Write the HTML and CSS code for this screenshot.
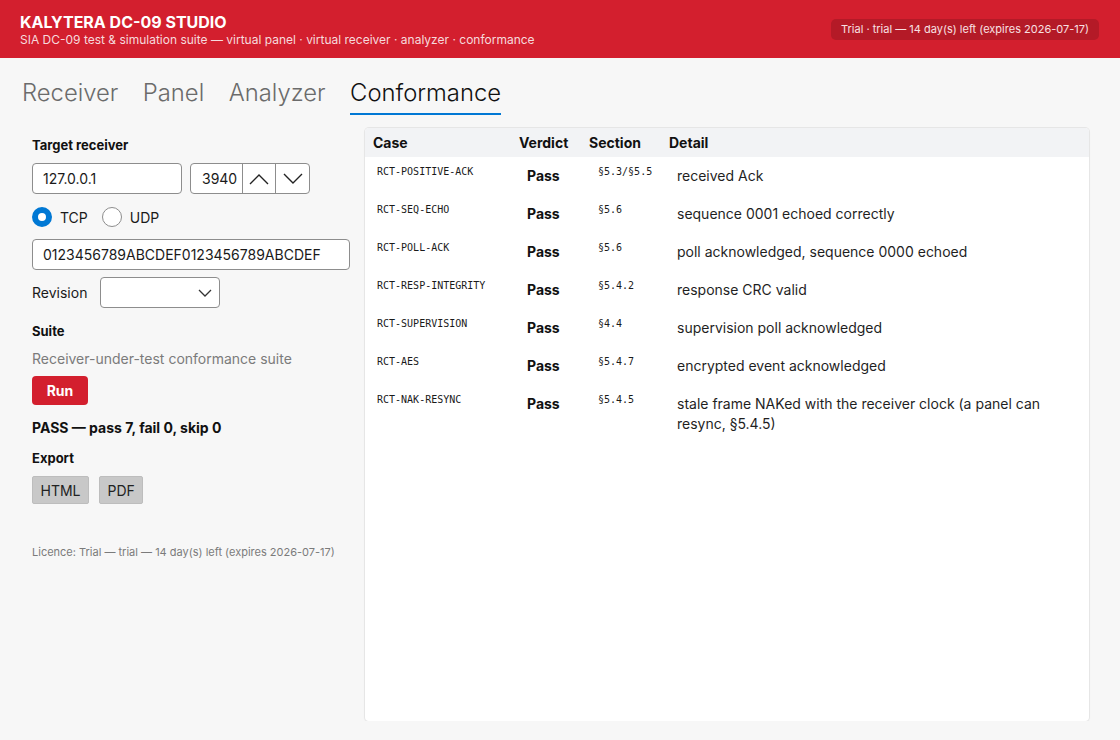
FILE: index.html
```html
<!DOCTYPE html>
<html lang="en">
<head>
    <meta charset="UTF-8">
    <title>Kalytera DC-09 Studio</title>
    <link rel="stylesheet" href="styles.css">
</head>
<body>
    <header class="topbar">
        <div class="brand">
            <h1>KALYTERA DC-09 STUDIO</h1>
            <p>SIA DC-09 test &amp; simulation suite — virtual panel · virtual receiver · analyzer · conformance</p>
        </div>
        <div class="licence-badge">Trial · trial — 14 day(s) left (expires 2026-07-17)</div>
    </header>

    <nav class="tabs">
        <a class="tab">Receiver</a>
        <a class="tab">Panel</a>
        <a class="tab">Analyzer</a>
        <a class="tab active">Conformance</a>
    </nav>

    <main class="layout">
        <aside class="sidebar">
            <h3>Target receiver</h3>
            <div class="row">
                <div class="field host">127.0.0.1</div>
                <div class="spin">
                    <div class="spin-value">3940</div>
                    <div class="spin-btn">
                        <svg width="20" height="12" viewBox="0 0 20 12"><path d="M1 11 L10 2 L19 11" fill="none" stroke="#222" stroke-width="1.4"/></svg>
                    </div>
                    <div class="spin-btn">
                        <svg width="20" height="12" viewBox="0 0 20 12"><path d="M1 1 L10 10 L19 1" fill="none" stroke="#222" stroke-width="1.4"/></svg>
                    </div>
                </div>
            </div>
            <div class="radios">
                <label class="radio"><span class="dot checked"></span>TCP</label>
                <label class="radio"><span class="dot"></span>UDP</label>
            </div>
            <div class="field key">0123456789ABCDEF0123456789ABCDEF</div>
            <div class="row revision">
                <span class="label">Revision</span>
                <div class="select">
                    <svg width="14" height="8" viewBox="0 0 14 8"><path d="M1 1 L7 7 L13 1" fill="none" stroke="#333" stroke-width="1.3"/></svg>
                </div>
            </div>

            <h3 class="suite-title">Suite</h3>
            <p class="muted">Receiver-under-test conformance suite</p>
            <button class="btn-run">Run</button>
            <p class="summary">PASS — pass 7, fail 0, skip 0</p>

            <h3 class="export-title">Export</h3>
            <div class="exports">
                <button class="btn-grey">HTML</button>
                <button class="btn-grey">PDF</button>
            </div>

            <p class="licence">Licence: Trial — trial — 14 day(s) left (expires 2026-07-17)</p>
        </aside>

        <section class="card">
            <table class="results">
                <thead>
                    <tr>
                        <th class="c-case">Case</th>
                        <th class="c-verdict">Verdict</th>
                        <th class="c-section">Section</th>
                        <th>Detail</th>
                    </tr>
                </thead>
                <tbody id="rows"></tbody>
            </table>
        </section>
    </main>

    <script>
    // conformance results
    const results = [
        ['RCT-POSITIVE-ACK', '§5.3/§5.5', 'received Ack'],
        ['RCT-SEQ-ECHO', '§5.6', 'sequence 0001 echoed correctly'],
        ['RCT-POLL-ACK', '§5.6', 'poll acknowledged, sequence 0000 echoed'],
        ['RCT-RESP-INTEGRITY', '§5.4.2', 'response CRC valid'],
        ['RCT-SUPERVISION', '§4.4', 'supervision poll acknowledged'],
        ['RCT-AES', '§5.4.7', 'encrypted event acknowledged'],
        ['RCT-NAK-RESYNC', '§5.4.5', 'stale frame NAKed with the receiver clock (a panel can resync, §5.4.5)']
    ];

    const tbody = document.getElementById('rows');
    results.forEach(r => {
        const tr = document.createElement('tr');
        tr.innerHTML = `
            <td class="mono case">${r[0]}</td>
            <td class="verdict">Pass</td>
            <td class="mono section">${r[1]}</td>
            <td class="detail">${r[2]}</td>
        `;
        tbody.appendChild(tr);
    });
    </script>
</body>
</html>
```

FILE: styles.css
```css
* {
    margin: 0;
    padding: 0;
    box-sizing: border-box;
}

body {
    font-family: Inter, "Noto Sans", sans-serif;
    background-color: #f7f7f7;
    color: #1a1a1a;
    font-size: 14px;
}

.topbar {
    display: flex;
    align-items: center;
    justify-content: space-between;
    height: 58px;
    padding: 0 20px;
    background: #d31f2e;
    color: #fff;
}

.brand h1 {
    font-size: 16px;
    font-weight: 700;
    line-height: 20px;
    margin-top: 2px;
}

.brand p {
    font-size: 12px;
    line-height: 16px;
    color: #f6dadd;
}

.licence-badge {
    background: #b41a27;
    color: #f8e0e2;
    font-size: 11px;
    line-height: 21px;
    padding: 0 10px;
    border-radius: 5px;
    margin-right: 1px;
}

.tabs {
    display: flex;
    gap: 24.5px;
    padding: 19px 22px 0;
    height: 70px;
}

.tab {
    font-size: 23.8px;
    font-weight: 300;
    line-height: 32px;
    color: #6b6b6b;
    padding-bottom: 4px;
    height: 38px;
    border-bottom: 2px solid transparent;
}

.tab.active {
    color: #111;
    border-bottom-color: #0078d4;
}

.layout {
    display: grid;
    grid-template-columns: 318px 1fr;
    gap: 15px;
    padding: 0 31px 0 32px;
}

.sidebar {
    padding-top: 9px;
}

.sidebar h3 {
    font-size: 13px;
    font-weight: 700;
    line-height: 16px;
    color: #111;
}

.row {
    display: flex;
    align-items: center;
}

.field {
    height: 31px;
    border: 1px solid #8d8d8d;
    border-radius: 4px;
    background: #fff;
    padding: 0 10px;
    line-height: 29px;
    font-size: 14px;
    color: #1a1a1a;
}

.host {
    width: 150px;
    margin-top: 10px;
}

.spin {
    display: flex;
    width: 120px;
    height: 31px;
    margin: 10px 0 0 8px;
    border: 1px solid #8d8d8d;
    border-radius: 4px;
    background: #fff;
}

.spin-value {
    width: 51px;
    line-height: 29px;
    padding-left: 11px;
    font-size: 14px;
}

.spin-btn {
    display: flex;
    align-items: center;
    justify-content: center;
    width: 34px;
    border-left: 1px solid #8d8d8d;
}

.radios {
    display: flex;
    gap: 14px;
    height: 45px;
    padding-top: 1px;
    align-items: center;
}

.radio {
    display: flex;
    align-items: center;
    gap: 8px;
    font-size: 14px;
}

.dot {
    width: 20px;
    height: 20px;
    border-radius: 50%;
    border: 1px solid #8d8d8d;
    background: #fff;
}

.dot.checked {
    border: 6px solid #0078d4;
}

.key {
    width: 318px;
}

.revision {
    margin-top: 7px;
    gap: 11px;
}

.label {
    font-size: 14px;
    width: 57px;
}

.select {
    display: flex;
    align-items: center;
    justify-content: flex-end;
    width: 120px;
    height: 31px;
    padding-right: 7px;
    border: 1px solid #8d8d8d;
    border-radius: 4px;
    background: #fff;
}

.suite-title {
    margin-top: 15px;
}

.muted {
    color: #7b7b7b;
    font-size: 14px;
    line-height: 20px;
    margin-top: 10px;
}

.btn-run {
    margin-top: 7px;
    width: 56px;
    height: 29px;
    background: #d31f2e;
    color: #fff;
    border: none;
    border-radius: 4px;
    font-family: inherit;
    font-size: 14px;
    font-weight: 700;
}

.summary {
    font-size: 14px;
    font-weight: 700;
    line-height: 20px;
    margin-top: 13px;
    color: #111;
}

.export-title {
    margin-top: 12px;
}

.exports {
    display: flex;
    gap: 10px;
    margin-top: 10px;
}

.btn-grey {
    height: 28px;
    padding: 0 7.5px;
    background: #c8c8c8;
    border: 1px solid #bdbdbd;
    border-radius: 2px;
    font-family: inherit;
    font-size: 14px;
    color: #222;
}

.licence {
    margin-top: 41px;
    font-size: 11px;
    color: #7b7b7b;
}

.card {
    height: 593px;
    background: #fff;
    border-radius: 4px;
    box-shadow: 0 0 0 1px #e6e6e6, 0 1px 2px rgba(0, 0, 0, 0.08);
    overflow: hidden;
}

.results {
    width: 100%;
    border-collapse: collapse;
}

.results th {
    background: #f2f3f5;
    text-align: left;
    font-size: 14px;
    font-weight: 700;
    height: 29px;
    padding: 0 8px;
    color: #111;
}

.c-case { width: 146px; }
.c-verdict { width: 70px; }
.c-section { width: 80px; }

.results td {
    vertical-align: top;
    padding: 9px 16px 9px 16px;
    font-size: 14px;
    line-height: 20px;
}

.results td.case {
    padding-left: 12px;
}

.results td.section {
    padding-right: 8px;
    padding-left: 17px;
}

.mono {
    font-family: "DejaVu Sans Mono", monospace;
    white-space: nowrap;
}

.results td.mono {
    font-size: 10px;
    line-height: 10px;
    padding-top: 10px;
}

.verdict {
    font-weight: 700;
    color: #111;
}

.detail {
    color: #1f1f1f;
}
```
